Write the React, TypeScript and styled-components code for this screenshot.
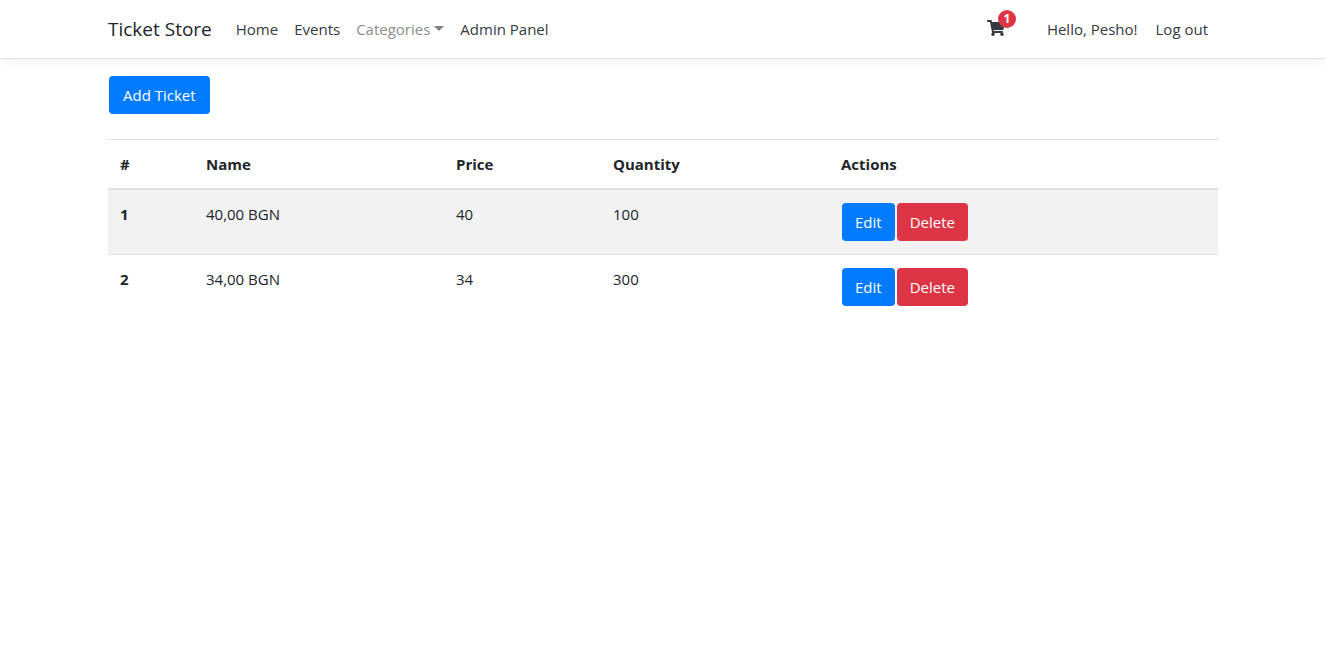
import React from "react";
import styled, { createGlobalStyle, css } from "styled-components";
import { FaShoppingCart } from "react-icons/fa";

const GlobalStyle = createGlobalStyle`
  *, *::before, *::after { box-sizing: border-box; }
  body {
    margin: 0;
    background: #fff;
    color: #212529;
    font-family: "Segoe UI", "Open Sans", "Noto Sans", sans-serif;
    font-size: 15px;
    font-weight: 400;
    line-height: 24px;
  }
`;

const container = css`
  width: 100%;
  max-width: 1140px;
  margin: 0 auto;
  padding: 0 15px;
`;

const Header = styled.header`
  border-bottom: 1px solid #dee2e6;
  box-shadow: 0 4px 12px rgba(0, 0, 0, 0.05);
`;

const Navbar = styled.nav`
  ${container}
  display: flex;
  align-items: center;
  min-height: 58px;
`;

const Brand = styled.a`
  margin-right: 16px;
  color: #212529;
  font-size: 19px;
  line-height: 30px;
  text-decoration: none;
  white-space: nowrap;
`;

const NavList = styled.ul`
  display: flex;
  align-items: center;
  margin: 0;
  padding: 0;
  list-style: none;
`;

const AccountList = styled(NavList)`
  gap: 2px;
  margin-left: auto;
  padding-right: 2px;
`;

const NavLink = styled.a<{ $muted?: boolean }>`
  display: block;
  padding: 8px;
  color: ${(p) => (p.$muted ? "#8c8c8c" : "#343a40")};
  text-decoration: none;
  white-space: nowrap;
`;

const Caret = styled.span`
  display: inline-block;
  margin-left: 4px;
  vertical-align: 4px;
  border-top: 5px solid #7f7f7f;
  border-right: 5px solid transparent;
  border-left: 5px solid transparent;
`;

const CartLink = styled.a`
  position: relative;
  display: block;
  margin-right: 32px;
  padding-bottom: 2px;
  color: #343a40;
  line-height: 0;

  svg {
    width: 18px;
    height: 16px;
  }
`;

const CartBadge = styled.span`
  position: absolute;
  top: -10px;
  left: 11px;
  width: 18px;
  height: 18px;
  border-radius: 50%;
  background: #dc3545;
  color: #fff;
  font-size: 12px;
  font-weight: 700;
  line-height: 18px;
  text-align: center;
`;

const Main = styled.main`
  ${container}
  padding-top: 16px;
`;

const Button = styled.button<{ $danger?: boolean }>`
  height: 38px;
  margin: 1px;
  padding: 0 13px;
  border: 0;
  border-radius: 4px;
  background: ${(p) => (p.$danger ? "#dc3545" : "#007bff")};
  color: #fff;
  font: inherit;
  cursor: pointer;
`;

const AddButton = styled(Button)`
  padding: 0 14px;
`;

const Table = styled.table`
  width: 100%;
  margin-top: 24px;
  border-collapse: collapse;
  table-layout: fixed;

  th,
  td {
    padding: 12px;
    border-top: 1px solid #dee2e6;
    text-align: left;
    vertical-align: top;
  }

  th {
    font-weight: 700;
  }

  thead th {
    border-bottom: 2px solid #dee2e6;
  }

  tbody tr:nth-of-type(odd) {
    background: #f2f2f2;
  }
`;

const Column = styled.col<{ $width?: number }>`
  width: ${(p) => (p.$width ? `${p.$width}px` : "auto")};
`;

const Actions = styled.div`
  display: flex;
`;

const tickets = [
  { id: 1, name: "40,00 BGN", price: 40, quantity: 100 },
  { id: 2, name: "34,00 BGN", price: 34, quantity: 300 },
];

export default function App() {
  return (
    <>
      <GlobalStyle />
      <Header>
        <Navbar>
          <Brand href="#">Ticket Store</Brand>
          <NavList>
            <li><NavLink href="#">Home</NavLink></li>
            <li><NavLink href="#">Events</NavLink></li>
            <li><NavLink href="#" $muted>Categories<Caret /></NavLink></li>
            <li><NavLink href="#">Admin Panel</NavLink></li>
          </NavList>
          <AccountList>
            <li>
              <CartLink href="#" aria-label="Cart">
                <FaShoppingCart />
                <CartBadge>1</CartBadge>
              </CartLink>
            </li>
            <li><NavLink href="#">Hello, Pesho!</NavLink></li>
            <li><NavLink href="#">Log out</NavLink></li>
          </AccountList>
        </Navbar>
      </Header>
      <Main>
        <AddButton type="button">Add Ticket</AddButton>
        <Table>
          <colgroup>
            <Column $width={86} />
            <Column $width={250} />
            <Column $width={157} />
            <Column $width={228} />
            <Column />
          </colgroup>
          <thead>
            <tr>
              <th scope="col">#</th>
              <th scope="col">Name</th>
              <th scope="col">Price</th>
              <th scope="col">Quantity</th>
              <th scope="col">Actions</th>
            </tr>
          </thead>
          <tbody>
            {tickets.map((ticket) => (
              <tr key={ticket.id}>
                <th scope="row">{ticket.id}</th>
                <td>{ticket.name}</td>
                <td>{ticket.price}</td>
                <td>{ticket.quantity}</td>
                <td>
                  <Actions>
                    <Button type="button">Edit</Button>
                    <Button type="button" $danger>Delete</Button>
                  </Actions>
                </td>
              </tr>
            ))}
          </tbody>
        </Table>
      </Main>
    </>
  );
}
